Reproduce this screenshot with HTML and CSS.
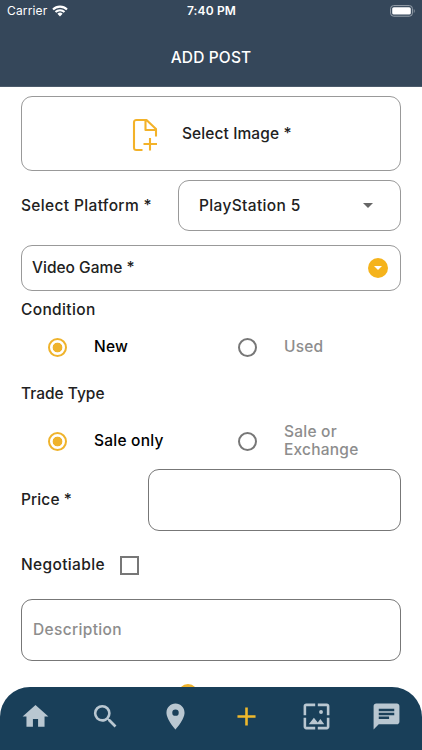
FILE: index.html
```
<!DOCTYPE html>
<html lang="en">
<head>
<meta charset="utf-8">
<title>Add Post</title>
<link rel="stylesheet" href="styles.css">
</head>
<body>
<div class="app">
  <header class="header">
    <div class="status">
      <div class="carrier"><span class="carrier-name">Carrier</span>
        <svg class="wifi" viewBox="0 0 16 12"><path d="M1 4.5a10 10 0 0 1 14 0M3.5 7.1a6.4 6.4 0 0 1 9 0" fill="none" stroke="#fff" stroke-width="2.1"/><path d="M8 11.4 5.4 8.8a3.7 3.7 0 0 1 5.2 0z" fill="#fff"/></svg>
      </div>
      <div class="time">7:40 PM</div>
      <svg class="battery" viewBox="0 0 26 12"><rect x=".6" y=".6" width="21.8" height="10.6" rx="3" fill="none" stroke="#98a2ac"/><rect x="2.2" y="2.2" width="18.6" height="7.4" rx="1.6" fill="#fff"/><path d="M23.8 4v4c1.2-.5 1.2-3.500 0-4z" fill="#98a2ac"/></svg>
    </div>
    <h1 class="title">ADD POST</h1>
  </header>
  <main class="form">
    <div class="box image-box">
      <svg class="file-icon" viewBox="0 0 26 34"><path d="M10.500 32H4.500Q2 32 2 29.500V4.500Q2 2 4.500 2H14.500L24 11V18.500M13.500 2V12H24M18 20V32.500M11.500 26H25" fill="none" stroke="#f3b229" stroke-width="2.100" stroke-linejoin="round"/></svg>
      <span class="tight">Select Image *</span>
    </div>
    <div class="row platform-row">
      <span class="label">Select Platform *</span>
      <div class="box select"><span class="label">PlayStation 5</span><i class="caret"></i></div>
    </div>
    <div class="box game-box"><span class="tightest">Video Game *</span><span class="drop"><i></i></span></div>
    <div class="label section condition">Condition</div>
    <div class="radios">
      <div class="option on"><i class="radio"></i><span>New</span></div>
      <div class="option"><i class="radio"></i><span>Used</span></div>
    </div>
    <div class="tightest section trade">Trade Type</div>
    <div class="radios trade-radios">
      <div class="option on"><i class="radio"></i><span>Sale only</span></div>
      <div class="option"><i class="radio"></i><span>Sale or<br>Exchange</span></div>
    </div>
    <div class="row price-row"><span class="tight">Price *</span><div class="box dark price"></div></div>
    <div class="row negotiable"><span class="label">Negotiable</span><i class="check"></i></div>
    <div class="box dark description">Description</div>
    <div class="fab"></div>
  </main>
  <nav class="nav">
    <svg viewBox="0 0 24 24"><path d="M10 20v-6h4v6h5v-8h3L12 3 2 12h3v8z"/></svg>
    <svg viewBox="0 0 24 24"><path d="M15.500 14h-.79l-.28-.27A6.470 6.470 0 0 0 16 9.500 6.500 6.500 0 1 0 9.500 16c1.610 0 3.090-.59 4.230-1.570l.27.28v.79l5 4.990L20.490 19zm-6 0a4.500 4.500 0 1 1 0-9 4.500 4.500 0 0 1 0 9z"/></svg>
    <svg viewBox="0 0 24 24"><path d="M12 2C8.130 2 5 5.130 5 9c0 5.250 7 13 7 13s7-7.750 7-13c0-3.870-3.130-7-7-7zm0 9.500a2.500 2.500 0 1 1 0-5 2.500 2.500 0 0 1 0 5z"/></svg>
    <svg class="active" viewBox="0 0 24 24"><path d="M19 13h-6v6h-2v-6H5v-2h6V5h2v6h6z"/></svg>
    <svg viewBox="0 0 24 24"><path d="M4 4h7V2H4c-1.100 0-2 .9-2 2v7h2zm6 9-4 5h12l-3-4-2.030 2.710zm7-4.500a1.500 1.500 0 1 0-3 0 1.500 1.500 0 0 0 3 0zM20 2h-7v2h7v7h2V4c0-1.100-.9-2-2-2zm0 18h-7v2h7c1.100 0 2-.9 2-2v-7h-2zM4 13H2v7c0 1.100.9 2 2 2h7v-2H4z"/></svg>
    <svg viewBox="0 0 24 24"><path d="M20 2H4c-1.100 0-1.990.9-1.990 2L2 22l4-4h14c1.100 0 2-.9 2-2V4c0-1.100-.9-2-2-2zM6 9h12v2H6zm8 5H6v-2h8zm4-6H6V6h12z"/></svg>
  </nav>
</div>
</body>
</html>
```
FILE: styles.css
```
* { box-sizing: border-box; }
body { margin: 0; background: #fff; font-family: Inter, "Liberation Sans", sans-serif; }
.app { position: relative; width: 422px; height: 750px; overflow: hidden; font-size: 15.5px; line-height: 18px; font-weight: 500; letter-spacing: .35px; color: #212121; }
.header { height: 87px; background: #35475a; color: #fff; border-bottom: 1px solid #4c5b6b; }
.status { display: grid; grid-template-columns: 1fr auto 1fr; align-items: center; height: 22px; padding: 0 6px 0 7px; font-size: 12px; line-height: 22px; letter-spacing: .15px; }
.carrier { display: flex; align-items: center; gap: 5px; font-weight: 400; }
.wifi { width: 16px; height: 12px; }
.time { font-weight: 600; }
.battery { width: 26px; height: 12px; justify-self: end; }
.title { margin: 26px 0 0; font-size: 15.5px; line-height: 20px; font-weight: 500; letter-spacing: .15px; text-align: center; }
.form { display: flex; flex-direction: column; padding: 9px 21px 0; }
.box { border: 1px solid #999; border-radius: 11px; display: flex; align-items: center; }
.dark { border-color: #777; }
.tight { letter-spacing: .1px; }
.tightest { letter-spacing: 0; }
.row { display: flex; align-items: center; justify-content: space-between; }
.image-box { height: 75px; padding-left: 110px; gap: 24px; padding-top: 1px; }
.file-icon { width: 26px; height: 34px; margin-top: 2px; }
.platform-row { margin-top: 9px; height: 51px; }
.select { width: 223px; height: 51px; padding: 0 27px 0 20px; justify-content: space-between; }
.caret { border: 5px solid transparent; border-top-color: #666; border-bottom: 0; }
.game-box { margin-top: 14px; height: 46px; padding: 0 12px 0 10px; justify-content: space-between; }
.drop { width: 20px; height: 20px; border-radius: 50%; background: #f5b31b; display: flex; align-items: center; justify-content: center; }
.drop i { border: 4px solid transparent; border-top-color: #fff; border-bottom: 0; }
.section { height: 18px; }
.condition { margin-top: 10px; }
.radios { display: grid; grid-template-columns: 190px 190px; height: 36px; margin-top: 10px; color: #8d8d8d; align-items: center; letter-spacing: .22px; }
.option { display: flex; align-items: center; gap: 27px; padding-left: 27px; }
.radio { width: 19px; height: 19px; border: 2px solid #777; border-radius: 50%; flex: none; }
.on { color: #000; }
.on .radio { border-color: #efb32c; background: radial-gradient(circle, #efb32c 4.5px, transparent 5.2px); }
.trade { margin-top: 20px; }
.trade-radios { margin-top: 20px; }
.price-row { margin-top: 10px; height: 62px; }
.price { width: 253px; height: 62px; }
.negotiable { margin-top: 24px; height: 20px; justify-content: flex-start; gap: 15px; }
.check { width: 19px; height: 19px; border: 2px solid #777; }
.description { margin-top: 24px; height: 62px; padding-left: 11px; color: #8d8d8d; }
.fab { width: 20px; height: 20px; margin: 23px 0 0 157px; border-radius: 50%; background: #efb32c; }
.nav { position: absolute; left: 0; right: 0; bottom: 0; height: 63px; background: #193f59; border-radius: 30px 30px 0 0; display: grid; grid-template-columns: repeat(6, 1fr); justify-items: center; padding-top: 14px; }
.nav svg { width: 31px; height: 31px; fill: #b9c7d1; }
.nav .active { fill: #efb92c; }
```
